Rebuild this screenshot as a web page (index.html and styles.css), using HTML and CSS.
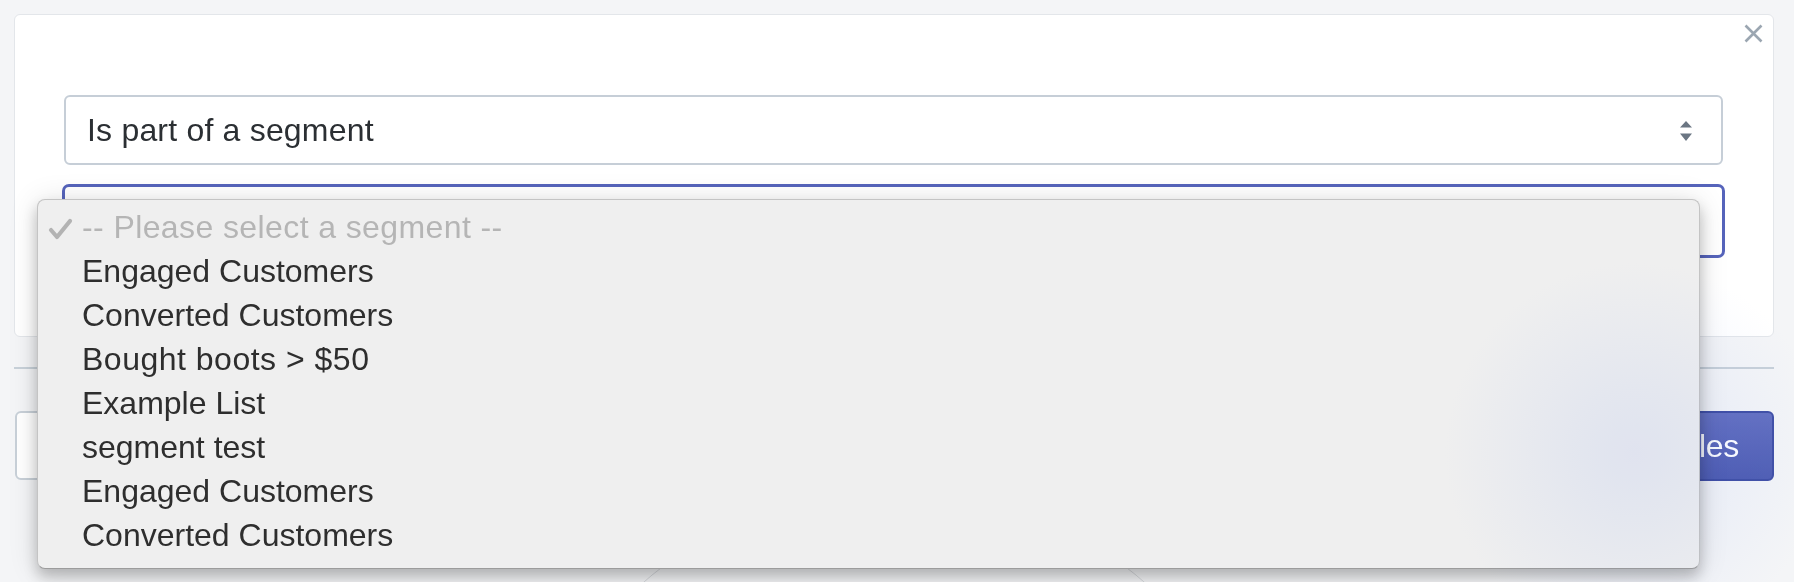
FILE: index.html
```html
<!DOCTYPE html>
<html>
<head>
<meta charset="utf-8">
<link rel="stylesheet" href="styles.css">
</head>
<body>
<div class="page">
  <div class="card">
    <div class="card-head">
      <button class="close" aria-label="Close">
        <svg width="19" height="19" viewBox="0 0 19 19"><path d="M1.5 1.5 L17.5 17.5 M17.5 1.5 L1.5 17.5" stroke="#9ba6b1" stroke-width="2.6" fill="none" stroke-linecap="butt"/></svg>
      </button>
    </div>
    <div class="form">
      <div class="select">
        <span class="select-text">Is part of a segment</span>
        <svg class="arrows" width="12" height="21" viewBox="0 0 12 21"><path d="M6 0 L12 6.5 L0 6.5 Z M0 12.5 L12 12.5 L6 20 Z" fill="#6b7683"/></svg>
      </div>
      <div class="select focused"></div>
    </div>
  </div>
  <div class="divider"></div>
  <div class="actions">
    <div class="btn btn-light"></div>
    <button class="btn btn-primary">Add rules</button>
  </div>
  <div class="circle-wrap"><div class="circle"></div></div>
</div>

<div class="menu">
  <div class="item placeholder">
    <svg class="check" width="26" height="22" viewBox="0 0 26 22"><path d="M3 12 L9 19 L22 3" stroke="#b3b3b3" stroke-width="4.2" fill="none" stroke-linecap="round" stroke-linejoin="round"/></svg>
    <span class="ph-text">-- Please select a segment --</span>
  </div>
  <div class="item">Engaged Customers</div>
  <div class="item">Converted Customers</div>
  <div class="item wide">Bought boots &gt; $50</div>
  <div class="item">Example List</div>
  <div class="item">segment test</div>
  <div class="item">Engaged Customers</div>
  <div class="item">Converted Customers</div>
</div>
<div class="glow"></div>
</body>
</html>
```

FILE: styles.css
```css
html, body {
  margin: 0;
  padding: 0;
  background: #f4f5f7;
  overflow: hidden;
  height: 582px;
  font-family: "Liberation Sans", Arial, sans-serif;
}

.page {
  box-sizing: border-box;
  height: 582px;
  overflow: hidden;
  padding: 14px 20px 0 14px;
  display: flex;
  flex-direction: column;
}

.card {
  background: #ffffff;
  border: 1px solid #e3e6ea;
  border-radius: 6px;
  height: 321px;
  flex: none;
  display: flex;
  flex-direction: column;
}

.card-head {
  display: flex;
  justify-content: flex-end;
  padding: 9px 10px 0 0;
}

.close {
  border: 0;
  background: transparent;
  padding: 0;
  width: 19px;
  height: 19px;
  display: block;
}
.close svg { display: block; }

.form {
  display: flex;
  flex-direction: column;
  gap: 19px;
  padding: 52px 50px 0 49px;
}

.select {
  height: 66px;
  border: 2px solid #c6ced7;
  border-radius: 6px;
  display: flex;
  align-items: center;
  justify-content: space-between;
  padding: 0 29px 0 21px;
  font-size: 32px;
  color: #2b2f33;
}

.select-text { letter-spacing: 0.2px; }

.arrows { display: block; margin-top: 2px; }

.select.focused {
  height: 68px;
  border: 3px solid #5664bb;
  border-radius: 7px;
  margin: 0 -2px;
}

.divider {
  height: 2px;
  flex: none;
  background: #c8d1d9;
  margin-top: 30px;
}

.actions {
  display: flex;
  justify-content: space-between;
  margin-top: 42px;
  flex: none;
}

.btn {
  box-sizing: border-box;
  height: 70px;
  border-radius: 6px;
  font-family: "Liberation Sans", Arial, sans-serif;
  font-size: 32px;
  padding: 0 33px;
}

.btn-light {
  background: #ffffff;
  border: 2px solid #c8d0d8;
  height: 69px;
  width: 180px;
  margin-left: 1px;
}

.btn-primary {
  background: linear-gradient(180deg, #6673c3 0%, #5160b5 100%);
  border: 2px solid #4252a8;
  color: #ffffff;
  letter-spacing: -0.3px;
}

.circle-wrap {
  align-self: center;
  width: 764px;
  height: 94px;
  margin-top: 7px;
  overflow: hidden;
  flex: none;
}

.circle {
  width: 762px;
  height: 762px;
  border-radius: 50%;
  border: 1px solid #d6d9dd;
}

.menu {
  position: absolute;
  left: 37px;
  top: 199px;
  width: 1617px;
  height: 353px;
  padding: 5px 0 10px 44px;
  background: #efefef;
  border: 1px solid #c4c4c4;
  border-bottom-color: #9c9c9c;
  border-radius: 8px;
  box-shadow: 0 8px 14px rgba(0, 0, 0, 0.22), 0 2px 30px rgba(0, 0, 0, 0.12);
  font-size: 32px;
  color: #2e2e2e;
}

.item {
  height: 44px;
  line-height: 44px;
  white-space: nowrap;
  position: relative;
}

.item.wide { letter-spacing: 0.5px; }

.placeholder { color: #b5b5b5; }
.ph-text { letter-spacing: 0.4px; }

.check {
  position: absolute;
  left: -34px;
  top: 13px;
}

.glow {
  position: absolute;
  left: 1445px;
  top: 263px;
  width: 349px;
  height: 319px;
  background: radial-gradient(circle 190px at 190px 190px, rgb(239, 243, 255) 0%, rgb(244, 247, 255) 35%, rgb(255, 255, 255) 100%);
  mix-blend-mode: multiply;
  pointer-events: none;
}
```
